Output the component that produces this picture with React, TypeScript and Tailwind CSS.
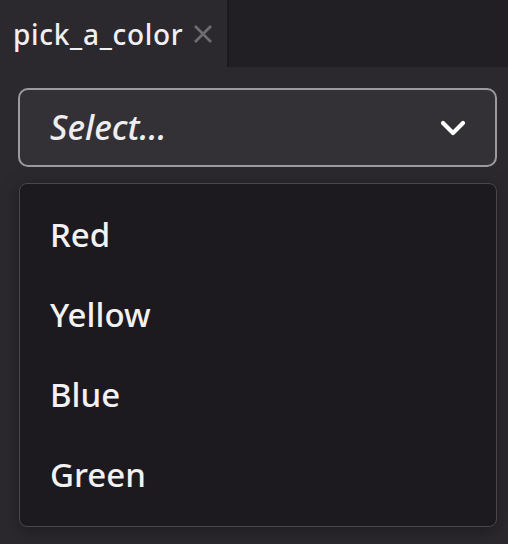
import { useState } from "react";

const OPTIONS = ["Red", "Yellow", "Blue", "Green"];

function CloseIcon() {
  return (
    <svg width="20" height="20" viewBox="0 0 20 20" className="shrink-0">
      <path d="M2 2 L18 18 M18 2 L2 18" stroke="#6e6d71" strokeWidth="2.6" strokeLinecap="butt" />
    </svg>
  );
}

function ChevronIcon() {
  return (
    <svg width="26" height="18" viewBox="0 0 26 18">
      <path d="M3 4 L13 14 L23 4" fill="none" stroke="#ffffff" strokeWidth="4.2" strokeLinecap="round" strokeLinejoin="round" />
    </svg>
  );
}

export default function App() {
  const [value, setValue] = useState<string | null>(null);

  return (
    <div
      className="w-[508px] h-[544px] bg-[#2b292d] flex flex-col text-[#f2f1f3] overflow-hidden"
      style={{ fontFamily: '"Noto Sans", "Open Sans", sans-serif' }}
    >
      {/* Tab bar */}
      <div className="h-[67px] flex shrink-0 bg-[#211f23]">
        <div className="w-[227px] bg-[#2b292d] flex items-center gap-[10px] pl-[13px] pt-[1px]">
          <span className="text-[28px] leading-none font-medium tracking-[0.7px] text-[#f0eff1]">pick_a_color</span>
          <CloseIcon />
        </div>
        <div className="w-[2px] bg-[#1a191c]" />
        <div className="flex-1" />
      </div>

      {/* Body */}
      <div className="flex flex-col pt-[21px] pl-[18px] pr-[11px]">
        <button className="h-[79px] w-full rounded-[10px] border-2 border-[#9b9a9e] bg-[#333135] flex items-center justify-between pl-[30px] pr-[29px]">
          <span className="text-[34px] italic font-medium text-[#eeedef]">{value ?? "Select..."}</span>
          <ChevronIcon />
        </button>

        <div className="mt-[16px] ml-[1px] rounded-[8px] border-[1.5px] border-[#48474b] bg-[#1c1a1f] py-[11px] shadow-[0_4px_18px_rgba(0,0,0,0.35)]">
          {OPTIONS.map((o) => (
            <div
              key={o}
              onClick={() => setValue(o)}
              className="h-[80px] flex items-center pl-[30px] text-[33px] font-medium text-[#f2f1f3] cursor-pointer"
            >
              {o}
            </div>
          ))}
        </div>
      </div>
    </div>
  );
}
